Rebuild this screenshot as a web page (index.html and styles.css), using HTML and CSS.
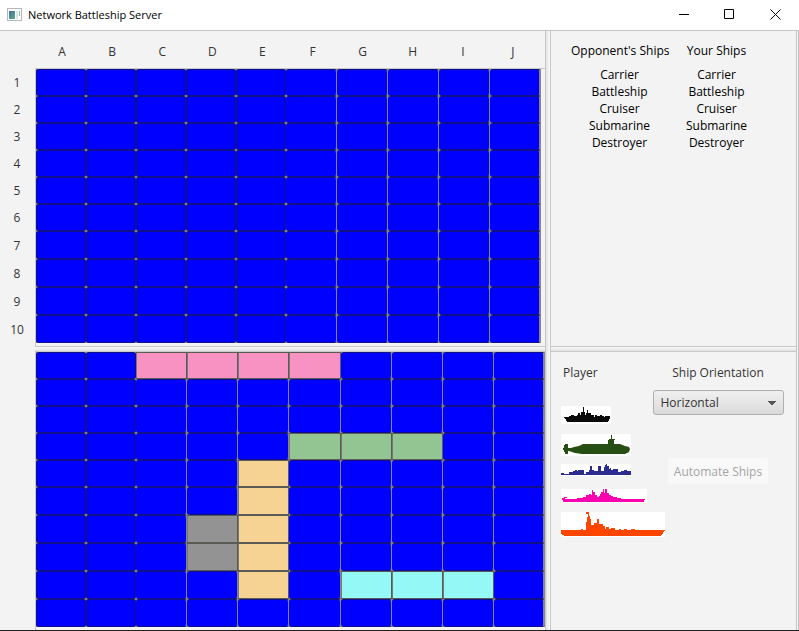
FILE: index.html
```html
<!DOCTYPE html>
<html lang="en">
<head>
<meta charset="utf-8">
<title>Network Battleship Server</title>
<link rel="stylesheet" href="styles.css">
</head>
<body>
<header class="titlebar">
  <svg class="app-icon" width="15" height="13" viewBox="0 0 15 13" aria-hidden="true">
    <defs><linearGradient id="pane" x1="0" y1="0" x2="1" y2="1"><stop offset="0" stop-color="#3c6ea0"/><stop offset="1" stop-color="#5fb089"/></linearGradient></defs>
    <rect x=".5" y=".5" width="14" height="12" fill="#fff" stroke="#b4b8bd"/>
    <rect x="2" y="3" width="6" height="8" fill="url(#pane)"/>
    <rect x="9" y="3" width="2" height="8" fill="#dce8e4"/>
    <rect x="12" y="3" width="1" height="5" fill="#8fc0a8"/>
  </svg>
  <h1 class="title">Network Battleship Server</h1>
  <div class="window-buttons">
    <button type="button" aria-label="Minimize"><svg width="11" height="11" viewBox="0 0 11 11"><path d="M1 5.500h10"/></svg></button>
    <button type="button" aria-label="Maximize"><svg width="11" height="11" viewBox="0 0 11 11"><path d="M.5.5h9v9h-9z"/></svg></button>
    <button type="button" aria-label="Close"><svg width="11" height="11" viewBox="0 0 11 11"><path d="M.5.5l10 10M10.500.5l-10 10"/></svg></button>
  </div>
</header>
<main class="window">
  <section class="battle">
    <div class="column-labels" id="columns"></div>
    <div class="row-labels" id="rows"></div>
    <div class="pane top"><div class="board enemy" id="enemy"></div></div>
    <div class="divider across"></div>
    <div class="pane"><div class="board own" id="own"></div></div>
  </section>
  <div class="divider"></div>
  <aside class="side">
    <section class="status">
      <div class="fleet">
        <h2>Opponent's Ships</h2>
        <ul><li>Carrier</li><li>Battleship</li><li>Cruiser</li><li>Submarine</li><li>Destroyer</li></ul>
      </div>
      <div class="fleet">
        <h2>Your Ships</h2>
        <ul><li>Carrier</li><li>Battleship</li><li>Cruiser</li><li>Submarine</li><li>Destroyer</li></ul>
      </div>
    </section>
    <div class="divider across"></div>
    <section class="setup">
      <div class="player">
        <h2>Player</h2>
        <div class="ships">
          <svg class="destroyer" width="50" height="18" viewBox="0 0 50 18"><path fill="#0a0a0a" d="M3 11H8V10H10V9H13V10H16V9H17V7H19V9H20V6H22V1H23V6H24V9H25V7H26V4H27V7H30V9H33V11H34V9H36V10H39V9H41V10H43V11H44V10H49V13H48V15H47V16H6V15H5V13H4V12H3Z"/></svg>
          <svg class="submarine" width="70" height="22" viewBox="0 0 70 22"><path fill="#274e13" d="M3 11H4V10H7V14H10L13 13L18 12L22 10H47V6H48V5H50V1H51V5H54V6H53V10H59L64 12L68 13L69 15L68 18L64 20H21L14 19L8 17H7V20H4V18H3V16H2V14H3Z"/></svg>
          <svg class="cruiser" width="70" height="12" viewBox="0 0 70 12"><path fill="#2b2b90" d="M0 9H3V10H8V8H12V7H14V6H16V7H17V6H23V10H25V8H28V6H29V2H31V6H33V7H37V2H40V7H43V3H44V1H45V0H46V2H48V5H49V4H50V6H52V5H57V8H60V7H63V6H66V7H70V11H3V11H0Z"/></svg>
          <svg class="battleship" width="86" height="14" viewBox="0 0 86 14"><path fill="#ff00b0" d="M1 10V9H3V8H6V9H4V10H16V9H22V8H25V6H28V5H30V6H31V1H32V3H34V6H36V8H38V7H39V5H40V3H42V0H43V4H44V0H46V4H48V6H50V7H52V8H56V9H60V10H84V11H83V13H2V11H1Z"/></svg>
          <svg class="carrier" width="104" height="25" viewBox="0 0 104 25"><path fill="#ff4500" d="M0 18H20V17H22V18H25V10H26V5H27V2H25V0H28V4H29V7H30V13H33V11H36V7H38V12H42V14H44V17H45V15H48V17H50V16H54V18H58V17H60V18H63V17H66V18H70V17H74V18H104V19H103V20H102V22H101V23H100V24H3V23H1V22H0Z"/></svg>
        </div>
      </div>
      <div class="controls">
        <label for="orientation">Ship Orientation</label>
        <select id="orientation"><option>Horizontal</option><option>Vertical</option></select>
        <button type="button" class="automate" disabled>Automate Ships</button>
      </div>
    </section>
  </aside>
</main>
<script src="board.js"></script>
</body>
</html>
```

FILE: styles.css
```css
* { box-sizing: border-box; }
body {
  margin: 0;
  min-height: 100vh;
  display: flex;
  flex-direction: column;
  background: #f3f3f3;
  border-bottom: 1px solid #202020;
  color: #333;
  font: 12px/17px "Open Sans", "Noto Sans", sans-serif;
}
h1, h2, ul { margin: 0; padding: 0; font: inherit; list-style: none; }
button, select { font: inherit; }

.titlebar {
  display: flex;
  align-items: center;
  height: 31px;
  padding: 0 1px 2px 7px;
  background: #fff;
  border-bottom: 1px solid #c5c5c5;
  color: #000;
}
.app-icon { margin-right: 6px; }
.title { font-size: 11px; }
.window-buttons { display: flex; margin-left: auto; }
.window-buttons button {
  display: grid;
  place-items: center;
  width: 46px;
  height: 28px;
  border: 0;
  padding: 0;
  background: none;
}
.window-buttons path { fill: none; stroke: #000; }

.window { flex: 1; display: grid; grid-template-columns: 545fr 6px 248fr; }
.battle {
  display: grid;
  grid-template-columns: 35px minmax(0, 1fr);
  grid-template-rows: 38px 277px 6px 1fr;
}
.column-labels {
  grid-column: 2;
  display: grid;
  grid-template-columns: repeat(10, 1fr);
  align-items: center;
  padding: 4px 7px 0 2px;
  border-bottom: 1px solid #c8c8c8;
  text-align: center;
}
.row-labels {
  grid-area: 2 / 1;
  display: grid;
  grid-template-rows: repeat(6, 27px) repeat(4, 28px);
  align-items: center;
  padding-right: 1px;
  text-align: center;
}
.pane { grid-column: 2; border-left: 1px solid #c8c8c8; }
.pane.top { padding-right: 4px; }
.divider {
  background: linear-gradient(90deg, #e2e2e2, #fafafa);
  border: solid #c8c8c8;
  border-width: 0 1px;
}
.divider.across {
  grid-column: 2;
  background: linear-gradient(#fafafa, #e2e2e2);
  border-width: 1px 0;
}
.board { display: grid; background: #8a8a8a; }
.enemy {
  grid-template-columns: repeat(5, 50fr) repeat(5, 51fr);
  grid-template-rows: repeat(6, 27px) repeat(4, 28px);
}
.own {
  grid-template-columns: repeat(2, 50fr) repeat(8, 51fr);
  grid-template-rows: repeat(5, 27px) repeat(5, 28px);
}
.cell {
  min-width: 0;
  padding: 0;
  border: solid #10108a;
  border-width: 1px 0;
  border-radius: 3px;
  background: #00f;
  box-shadow: inset 1px 0 #10108a, inset -1px 0 #10108a;
}
.cell.wide { border-right: 1px solid #858585; box-shadow: none; }
.cell:nth-child(10n) { border-right: 2px solid #858585; }
.cell.ship { border-color: #5b5b55; border-radius: 0; box-shadow: inset 1px 0 #777; }
.pink { background: #f892c3; }
.green { background: #93c593; }
.sand { background: #f6d393; }
.gray { background: #939393; }
.aqua { background: #93f8f6; }

.side {
  display: grid;
  grid-template-rows: 315px 6px 1fr;
  grid-template-columns: 1fr;
  border-right: 3px double #c5c5c5;
}
.side .divider { grid-column: 1; }
.status {
  display: flex;
  padding: 11px 20px;
  color: #000;
  text-align: center;
}
.fleet { width: 97px; white-space: nowrap; }
.fleet h2 { margin-bottom: 7px; }
.setup { display: flex; gap: 22px; padding: 12px 11px 12px 10px; }
.player h2 { padding-left: 2px; }
.ships { display: flex; flex-direction: column; align-items: flex-start; gap: 10px; padding-top: 25px; }
.ships svg { background: #fff; display: block; }
.submarine + .cruiser { margin-top: -2px; }
.battleship { margin-top: 3px; }
.carrier { margin-top: -1px; }
.controls { display: flex; flex: 1; flex-direction: column; align-items: center; margin-left: -36px; }
select {
  width: 131px;
  height: 25px;
  margin: 9px 0 43px;
  padding: 0 7px;
  border: 1px solid #b0b0b0;
  border-radius: 3px;
  appearance: none;
  color: #333;
  background:
    linear-gradient(to bottom left, #555 50%, transparent 52%) right 11px center / 4px 4px no-repeat,
    linear-gradient(to bottom right, #555 50%, transparent 52%) right 7px center / 4px 4px no-repeat,
    linear-gradient(#f0f0f0, #dadada);
}
.automate {
  height: 26px;
  padding: 0 6px;
  border: 0;
  border-radius: 3px;
  background: #f8f8f8;
  color: #a5a5a5;
}
```

FILE: board.js
```js
const letters = "ABCDEFGHIJ";
const fleet = {
  pink: ["C1", "D1", "E1", "F1"],
  green: ["F4", "G4", "H4"],
  sand: ["E5", "E6", "E7", "E8", "E9"],
  gray: ["D7", "D8"],
  aqua: ["G9", "H9", "I9"]
};

function addLabels(id, values) {
  for (const value of values) {
    const label = document.createElement("span");
    label.textContent = value;
    document.getElementById(id).append(label);
  }
}

function addCells(id, ships, wideFrom) {
  for (let row = 1; row <= 10; row++) {
    for (let column = 0; column < 10; column++) {
      const name = letters[column] + row;
      const cell = document.createElement("button");
      cell.type = "button";
      cell.className = "cell";
      cell.setAttribute("aria-label", name);
      if (column >= wideFrom) cell.classList.add("wide");
      for (const color in ships) {
        if (ships[color].includes(name)) cell.classList.add("ship", color);
      }
      document.getElementById(id).append(cell);
    }
  }
}

addLabels("columns", letters);
addLabels("rows", [1, 2, 3, 4, 5, 6, 7, 8, 9, 10]);
addCells("enemy", {}, 5);
addCells("own", fleet, 2);
```
